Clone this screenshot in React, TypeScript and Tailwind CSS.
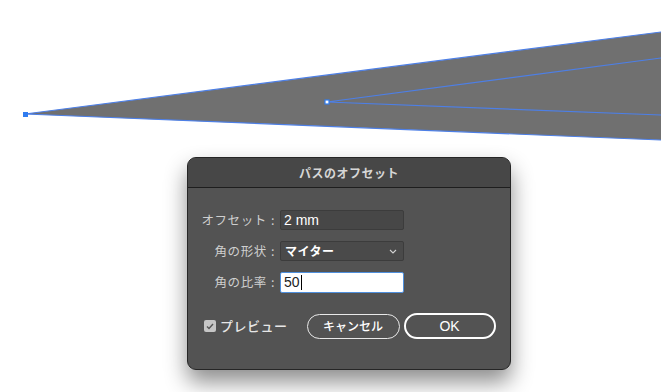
import React from 'react';

const jp = { fontFamily: '"Hiragino Sans", "Noto Sans CJK JP", "Liberation Sans", sans-serif' };
const latin = { fontFamily: '"Liberation Sans", "Noto Sans CJK JP", sans-serif' };

function Canvas() {
  return (
    <svg className="absolute inset-0" width={661} height={392} viewBox="0 0 661 392">
      <polygon points="25,114 661,32 661,140" fill="#707070" />
      <polyline points="661,32 25,114 661,140" fill="none" stroke="#4d7fe6" strokeWidth={1.2} />
      <polyline points="661,58 327,102 661,115" fill="none" stroke="#4d7fe6" strokeWidth={1.2} />
      <rect x={23} y={112} width={5} height={5} fill="#2f7cf0" />
      <rect x={325} y={100} width={4} height={4} fill="#ffffff" stroke="#2f7cf0" strokeWidth={1.2} />
    </svg>
  );
}

function Row({ label, children }: { label: string; children: React.ReactNode }) {
  return (
    <div className="flex items-center">
      <div className="w-[90px] pr-[3px] text-right text-[12.5px] text-[#cfcfcf] tracking-[0.6px]" style={jp}>
        {label}<span className="ml-[4px]">:</span>
      </div>
      <div className="ml-[2px] w-[124px]">{children}</div>
    </div>
  );
}

export default function App() {
  return (
    <div className="relative w-[661px] h-[392px] bg-white overflow-hidden">
      <Canvas />
      <div className="absolute left-[187px] top-[157px] w-[324px] h-[213px] rounded-[9px] border border-[#262626] bg-[#535353] shadow-[0_12px_22px_rgba(0,0,0,0.45)] overflow-hidden flex flex-col">
        <div className="h-[30px] shrink-0 bg-[#474747] border-b border-[#1e1e1e] flex items-center justify-center">
          <span className="text-[12px] font-bold text-[#d6d6d6] tracking-[0.5px]" style={jp}>
            パスのオフセット
          </span>
        </div>
        <div className="flex flex-col gap-[11px] pt-[22px]">
          <Row label="オフセット">
            <div className="h-[20px] bg-[#474747] border border-[#3c3c3c] rounded-[2px] flex items-center pl-[3px] text-[14px] text-white" style={latin}>
              2 mm
            </div>
          </Row>
          <Row label="角の形状">
            <div className="h-[20px] bg-[#4a4a4a] border border-[#3c3c3c] rounded-[2px] flex items-center justify-between pl-[4px] pr-[6px]">
              <span className="text-[12px] font-bold text-white tracking-[0.5px]" style={jp}>マイター</span>
              <svg width={8} height={5} viewBox="0 0 8 5">
                <polyline points="1,1 4,4 7,1" fill="none" stroke="#d0d0d0" strokeWidth={1.1} />
              </svg>
            </div>
          </Row>
          <Row label="角の比率">
            <div className="h-[21px] bg-white border-[1.5px] border-[#4f8fdc] rounded-[2px] flex items-center pl-[3px] text-[14px] text-[#222]" style={latin}>
              50<span className="ml-[1px] inline-block w-[1px] h-[15px] bg-black" />
            </div>
          </Row>
        </div>
        <div className="flex items-center mt-[20px] pl-[16px]">
          <div className="w-[12px] h-[12px] rounded-[2px] bg-[#c6c6c6] flex items-center justify-center">
            <svg width={8} height={7} viewBox="0 0 8 7">
              <polyline points="1,3.5 3,5.5 7,1" fill="none" stroke="#555" strokeWidth={1.4} />
            </svg>
          </div>
          <span className="ml-[4px] text-[13px] font-medium text-[#e6e6e6] tracking-[0.5px]" style={jp}>プレビュー</span>
          <button className="ml-[19px] w-[93px] h-[25px] rounded-full border-[1.5px] border-[#e8e8e8] text-[12px] font-medium text-white flex items-center justify-center" style={jp}>
            キャンセル
          </button>
          <button className="ml-[4px] w-[92px] h-[26px] rounded-full border-2 border-white text-[14px] text-white flex items-center justify-center" style={latin}>
            OK
          </button>
        </div>
      </div>
    </div>
  );
}
